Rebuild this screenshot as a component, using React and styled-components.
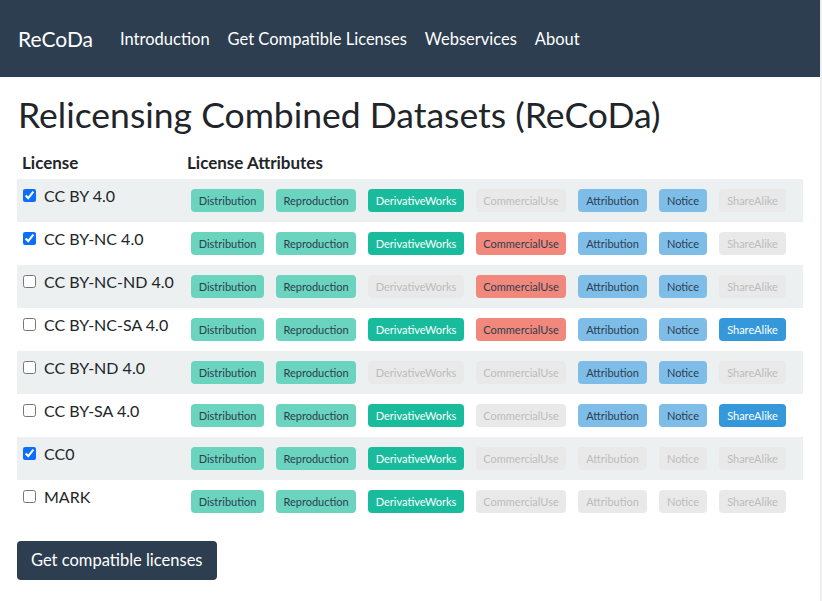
import React, { useState } from "react";
import styled, { createGlobalStyle } from "styled-components";

const Global = createGlobalStyle`
  html, body { margin: 0; padding: 0; background: #fff; }
  body { font-family: Lato, "Open Sans", "Liberation Sans", sans-serif; color: #212529; }
  * { box-sizing: border-box; }
`;

const Page = styled.div`
  min-height: 100vh;
  border-right: 2px solid #eeeeee;
`;

const Nav = styled.nav`
  height: 77px;
  background: #2c3e50;
  display: flex;
  align-items: center;
  padding: 0 18px;
`;

const Brand = styled.a`
  color: #fff;
  font-size: 21px;
  margin-right: 27px;
  text-decoration: none;
`;

const NavLink = styled.a`
  color: #fff;
  font-size: 16.5px;
  margin-right: 18px;
  text-decoration: none;
`;

const Main = styled.main`
  padding: 0 17px;
`;

const Title = styled.h1`
  font-size: 35.5px;
  font-weight: 400;
  color: #212529;
  margin: 17px 0 11px 1px;
  line-height: 1.2;
`;

const Table = styled.table`
  width: 786px;
  border-collapse: collapse;
`;

const Th = styled.th`
  text-align: left;
  font-size: 17px;
  font-weight: 700;
  padding: 4px 0 6px ${(p) => p.$pl || 0}px;
  width: ${(p) => p.$w || "auto"};
`;

const Tr = styled.tr`
  background: ${(p) => (p.$striped ? "#ecf0f1" : "transparent")};
  height: 43px;
`;

const LicenseCell = styled.td`
  vertical-align: top;
  padding: 7px 6px 0;
  font-size: 16px;
  white-space: nowrap;
`;

const Label = styled.label`
  display: flex;
  align-items: center;
  gap: 8px;
`;

const Check = styled.input`
  width: 13px;
  height: 13px;
  margin: 0;
  accent-color: #0d6efd;
`;

const AttrCell = styled.td`
  vertical-align: middle;
  padding: 0 4px;
`;

const Badges = styled.div`
  display: flex;
  gap: 12px;
`;

const palette = {
  light: { bg: "#6bd4be", fg: "#2c3e50" },
  success: { bg: "#18bc9c", fg: "#fff" },
  danger: { bg: "#f1887b", fg: "#2c3e50" },
  info: { bg: "#7ebde8", fg: "#2c3e50" },
  primary: { bg: "#3498db", fg: "#fff" },
  off: { bg: "#e9e9e9", fg: "#bcbcbc" },
};

const Badge = styled.span`
  display: inline-block;
  height: 23px;
  line-height: 23px;
  width: ${(p) => p.$w}px;
  text-align: center;
  font-size: 11px;
  border-radius: 4px;
  background: ${(p) => palette[p.$kind].bg};
  color: ${(p) => palette[p.$kind].fg};
  white-space: nowrap;
`;

const Button = styled.button`
  margin-top: 18px;
  background: #2c3e50;
  color: #fff;
  border: none;
  border-radius: 4px;
  height: 39px;
  padding: 0 14px;
  font-family: inherit;
  font-size: 16.5px;
`;

const attrs = [
  ["Distribution", "light", 73],
  ["Reproduction", "light", 80],
  ["DerivativeWorks", "success", 96],
  ["CommercialUse", "danger", 90],
  ["Attribution", "info", 69],
  ["Notice", "info", 48],
  ["ShareAlike", "primary", 67],
];

const rows = [
  ["CC BY 4.0", true, [1, 1, 1, 0, 1, 1, 0]],
  ["CC BY-NC 4.0", true, [1, 1, 1, 1, 1, 1, 0]],
  ["CC BY-NC-ND 4.0", false, [1, 1, 0, 1, 1, 1, 0]],
  ["CC BY-NC-SA 4.0", false, [1, 1, 1, 1, 1, 1, 1]],
  ["CC BY-ND 4.0", false, [1, 1, 0, 0, 1, 1, 0]],
  ["CC BY-SA 4.0", false, [1, 1, 1, 0, 1, 1, 1]],
  ["CC0", true, [1, 1, 1, 0, 0, 0, 0]],
  ["MARK", false, [1, 1, 1, 0, 0, 0, 0]],
];

export default function App() {
  const [checked, setChecked] = useState(rows.map((r) => r[1]));
  return (
    <Page>
      <Global />
      <Nav>
        <Brand>ReCoDa</Brand>
        <NavLink>Introduction</NavLink>
        <NavLink>Get Compatible Licenses</NavLink>
        <NavLink>Webservices</NavLink>
        <NavLink>About</NavLink>
      </Nav>
      <Main>
        <Title>Relicensing Combined Datasets (ReCoDa)</Title>
        <Table>
          <thead>
            <tr>
              <Th $w="170px" $pl={5}>License</Th>
              <Th>License Attributes</Th>
            </tr>
          </thead>
          <tbody>
            {rows.map(([name, , flags], i) => (
              <Tr key={name} $striped={i % 2 === 0}>
                <LicenseCell>
                  <Label>
                    <Check
                      type="checkbox"
                      checked={checked[i]}
                      onChange={() =>
                        setChecked((c) => c.map((v, j) => (j === i ? !v : v)))
                      }
                    />
                    {name}
                  </Label>
                </LicenseCell>
                <AttrCell>
                  <Badges>
                    {attrs.map(([a, kind, w], k) => (
                      <Badge key={a} $kind={flags[k] ? kind : "off"} $w={w}>
                        {a}
                      </Badge>
                    ))}
                  </Badges>
                </AttrCell>
              </Tr>
            ))}
          </tbody>
        </Table>
        <Button>Get compatible licenses</Button>
      </Main>
    </Page>
  );
}
